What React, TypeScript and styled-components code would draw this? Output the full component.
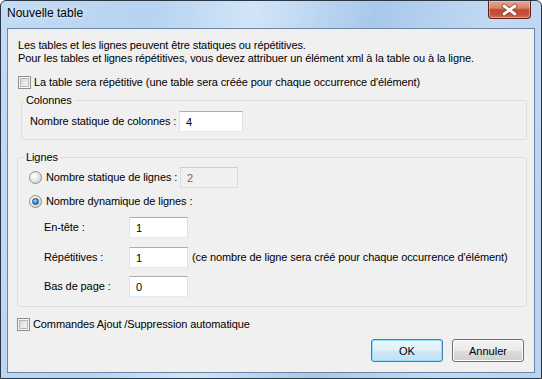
import React from 'react';
import styled, { createGlobalStyle } from 'styled-components';

const GlobalStyle = createGlobalStyle`
  html, body {
    margin: 0;
    padding: 0;
    background: #ffffff;
  }
  body {
    font-family: "Liberation Sans", Arial, sans-serif;
    font-size: 11px;
    letter-spacing: -0.1px;
    color: #000000;
  }
`;

const App = () => {
  return (
    <>
      <GlobalStyle />
      <Window>
        <TitleBar>
          <Title>Nouvelle table</Title>
          <CloseButton>
            <svg width="43" height="18" viewBox="0 0 43 18">
              <path d="M16 5 L27 13 M27 5 L16 13" stroke="#5a2219" strokeWidth="4.6" strokeLinecap="round" opacity="0.55" />
              <path d="M16 5 L27 13 M27 5 L16 13" stroke="#ffffff" strokeWidth="2.8" strokeLinecap="round" />
            </svg>
          </CloseButton>
        </TitleBar>
        <Panel>
          <Intro>
            Les tables et les lignes peuvent être statiques ou répétitives.
            <br />
            Pour les tables et lignes répétitives, vous devez attribuer un élément xml à la table ou à la ligne.
          </Intro>

          <CheckRow $top={10}>
            <CheckBox />
            <CheckLabel>La table sera répétitive (une table sera créée pour chaque occurrence d'élément)</CheckLabel>
          </CheckRow>

          <Group $left={3} $top={4} $padLeft={8} $padBottom={7}>
            <Legend $offset={-6}>Colonnes</Legend>
            <FieldRow $top={4}>
              <FieldLabel $width={149}>Nombre statique de colonnes :</FieldLabel>
              <TextBox $width={64} readOnly value="4" />
            </FieldRow>
          </Group>

          <Group $left={-1} $top={11} $padLeft={11} $padBottom={9}>
            <Legend $offset={-5}>Lignes</Legend>
            <FieldRow $top={3}>
              <Radio />
              <FieldLabel $width={134}>Nombre statique de lignes :</FieldLabel>
              <TextBox $width={58} $disabled readOnly value="2" />
            </FieldRow>
            <OptionRow>
              <Radio $checked />
              <FieldLabel>Nombre dynamique de lignes :</FieldLabel>
            </OptionRow>
            <FieldRow $top={8} $indent={15}>
              <FieldLabel $width={85}>En-tête :</FieldLabel>
              <TextBox $width={59} readOnly value="1" />
            </FieldRow>
            <FieldRow $top={9} $indent={15}>
              <FieldLabel $width={85}>Répétitives :</FieldLabel>
              <TextBox $width={59} readOnly value="1" />
              <Hint>(ce nombre de ligne sera créé pour chaque occurrence d'élément)</Hint>
            </FieldRow>
            <FieldRow $top={8} $indent={15}>
              <FieldLabel $width={85}>Bas de page :</FieldLabel>
              <TextBox $width={59} readOnly value="0" />
            </FieldRow>
          </Group>

          <CheckRow $top={10} $left={-1}>
            <CheckBox />
            <CheckLabel>Commandes Ajout /Suppression automatique</CheckLabel>
          </CheckRow>

          <ButtonBar>
            <Button $primary>OK</Button>
            <Button>Annuler</Button>
          </ButtonBar>
        </Panel>
      </Window>
    </>
  );
};

// Outer Aero frame of the dialog
const Window = styled.div`
  width: 542px;
  height: 379px;
  box-sizing: border-box;
  border: 1px solid #2b3744;
  border-radius: 6px 6px 0 0;
  background: linear-gradient(100deg, #c3dbf4 0%, #b6d3f1 25%, #d2e5f8 42%, #a8c8eb 62%, #c2daf3 82%, #b9d4f0 100%);
  padding: 0 6px 5px 6px;
  display: flex;
  flex-direction: column;
  overflow: hidden;
`;

const TitleBar = styled.div`
  height: 27px;
  display: flex;
  justify-content: space-between;
  align-items: flex-start;
`;

const Title = styled.span`
  font-size: 12px;
  line-height: 14px;
  letter-spacing: 0;
  padding-top: 5px;
  color: #000000;
  text-shadow: 0 0 6px rgba(255, 255, 255, 0.9);
`;

const CloseButton = styled.div`
  width: 43px;
  height: 18px;
  margin-right: 4px;
  box-sizing: border-box;
  border: 1px solid #5b2119;
  border-top: none;
  border-radius: 0 0 4px 4px;
  background: linear-gradient(#e6a593 0%, #d8866f 40%, #c14a32 52%, #c6523b 80%, #d6735b 100%);
  box-shadow: inset 0 0 0 1px rgba(255, 210, 200, 0.45);
  display: flex;
  align-items: center;
  justify-content: center;

  svg {
    display: block;
    margin: -1px;
  }
`;

// Grey client area inside the frame
const Panel = styled.div`
  flex: 1;
  background: #f0f0f0;
  border: 1px solid #6a86a4;
  padding: 10px 7px 10px 10px;
  display: flex;
  flex-direction: column;
`;

const Intro = styled.p`
  margin: 0;
  line-height: 13px;
`;

const CheckRow = styled.div<{ $top: number; $left?: number }>`
  display: flex;
  align-items: center;
  height: 15px;
  margin-top: ${p => p.$top}px;
  margin-left: ${p => p.$left || 0}px;
`;

const CheckBox = styled.span`
  width: 13px;
  height: 13px;
  flex: none;
  box-sizing: border-box;
  border: 1px solid #8e8f8f;
  background: linear-gradient(135deg, #cdd1d6 0%, #e6e8ea 50%, #f8f8f8 100%);
  box-shadow: inset 0 0 0 1px #f6f6f6, inset 0 0 0 2px #b4b8bd;
`;

const CheckLabel = styled.span`
  margin-left: 3px;
  line-height: 13px;
`;

const Group = styled.fieldset<{ $left: number; $top: number; $padLeft: number; $padBottom: number }>`
  margin: ${p => p.$top}px 0 0 ${p => p.$left}px;
  border: 1px solid #d5dfe5;
  border-radius: 3px;
  padding: 0 8px ${p => p.$padBottom}px ${p => p.$padLeft}px;
  min-width: 0;
`;

const Legend = styled.legend<{ $offset: number }>`
  padding: 0 2px;
  margin-left: ${p => p.$offset}px;
  line-height: 13px;
  font-size: 11px;
`;

const FieldRow = styled.div<{ $top: number; $indent?: number }>`
  display: flex;
  align-items: center;
  height: 21px;
  margin-top: ${p => p.$top}px;
  margin-left: ${p => p.$indent || 0}px;
`;

const OptionRow = styled.div`
  display: flex;
  align-items: center;
  height: 15px;
  margin-top: 6px;
`;

const FieldLabel = styled.span<{ $width?: number }>`
  line-height: 13px;
  white-space: nowrap;
  ${p => (p.$width ? `width: ${p.$width}px; flex: none;` : '')}
`;

const TextBox = styled.input<{ $width: number; $disabled?: boolean }>`
  width: ${p => p.$width}px;
  height: 21px;
  box-sizing: border-box;
  margin: 0;
  padding: 0 0 0 6px;
  font-family: "Liberation Sans", Arial, sans-serif;
  font-size: 11px;
  outline: none;
  border: 1px solid;
  border-color: ${p => (p.$disabled ? '#c9ccd0 #d9dcdf #dcdfe2 #d9dcdf' : '#abadb3 #dbdfe6 #e3e9ef #e2e3ea')};
  background: ${p => (p.$disabled ? '#f0f0f0' : '#ffffff')};
  color: ${p => (p.$disabled ? '#6d6d6d' : '#000000')};
`;

const Radio = styled.span<{ $checked?: boolean }>`
  width: 13px;
  height: 13px;
  flex: none;
  box-sizing: border-box;
  margin-right: 4px;
  border: 1px solid #8e8f8f;
  border-radius: 50%;
  background: radial-gradient(circle at 35% 35%, #ffffff 0%, #e8e8e8 45%, #c4c6c9 100%);
  position: relative;

  &::after {
    content: '';
    display: ${p => (p.$checked ? 'block' : 'none')};
    position: absolute;
    inset: 2px;
    border-radius: 50%;
    border: 1px solid #1f4f7c;
    background: radial-gradient(circle at 40% 35%, #a8e2ff 0%, #3b92d4 50%, #1a5a93 100%);
  }
`;

const Hint = styled.span`
  margin-left: 4px;
  line-height: 13px;
  white-space: nowrap;
`;

const ButtonBar = styled.div`
  margin-top: auto;
  margin-right: 3px;
  display: flex;
  justify-content: flex-end;
  gap: 9px;
`;

const Button = styled.button<{ $primary?: boolean }>`
  width: 72px;
  height: 23px;
  margin: 0;
  padding: 0;
  font-family: "Liberation Sans", Arial, sans-serif;
  font-size: 11px;
  color: #000000;
  border-radius: 3px;
  border: 1px solid ${p => (p.$primary ? '#3c7fb1' : '#707070')};
  background: ${p =>
    p.$primary
      ? 'linear-gradient(#eef7fc 0%, #dfeff9 50%, #d0e8f6 51%, #c2e0f2 100%)'
      : 'linear-gradient(#f2f2f2 0%, #ebebeb 50%, #dddddd 51%, #cfcfcf 100%)'};
  box-shadow: ${p => (p.$primary ? 'inset 0 0 0 1px #8fe0fa' : 'inset 0 0 0 1px #fcfcfc')};
`;

export default App;
